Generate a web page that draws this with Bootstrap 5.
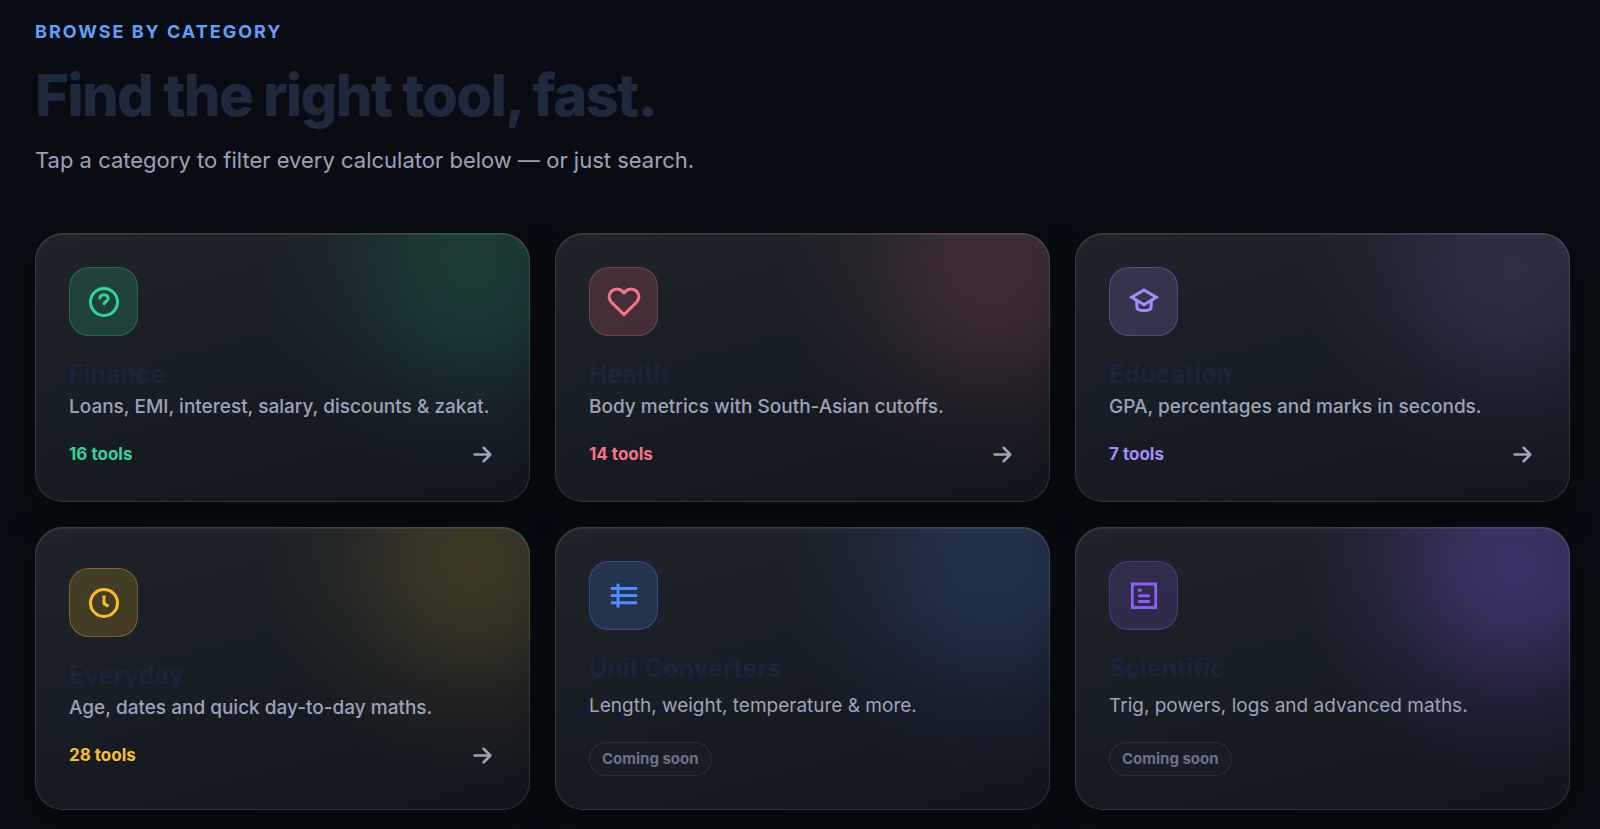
<!DOCTYPE html>
<html lang="en">
<head>
<meta charset="utf-8">
<meta name="viewport" content="width=device-width, initial-scale=1">
<title>Browse by category</title>
<link href="https://cdn.jsdelivr.net/npm/bootstrap@5.3.0/dist/css/bootstrap.min.css" rel="stylesheet">
<style>
  body { background: #090d13; color: #9ca3b8; font-family: Inter, "Liberation Sans", sans-serif; overflow-x: hidden; }
  .browse { padding: 17px 30px 19px 35px; }
  .eyebrow { color: #60a0fc; font-size: 18px; line-height: 30px; font-weight: 700; letter-spacing: 2px; text-transform: uppercase; }
  .headline { color: #1e293b; font-size: 58px; line-height: 64px; font-weight: 800; letter-spacing: -0.03em; margin: 16px 0 15px; }
  .intro { font-size: 22px; line-height: 36px; margin-bottom: 55px; }
  .tiles { display: grid; grid-template-columns: repeat(3, minmax(0, 1fr)); gap: 25px; }
  .tile {
    display: flex; flex-direction: column; justify-content: center; align-items: stretch; text-align: left;
    padding: 33px; border: 1px solid rgba(255,255,255,.12); border-radius: 28px; color: #9ca3b8;
    background: radial-gradient(circle at calc(100% - 55px) 42px, rgba(var(--tone), var(--glow, .17)) 0, rgba(var(--tone), calc(var(--glow, .17) * .8)) 60px, rgba(var(--tone), calc(var(--glow, .17) * .3)) 135px, rgba(var(--tone), 0) 215px),
      linear-gradient(165deg, #20242a 0%, #181e25 45%, #12151d 100%);
    background-origin: border-box;
    box-shadow: 0 12px 36px rgba(0,0,0,.4), inset 0 1px 0 rgba(255,255,255,.08);
  }
  .tile-icon { width: 69px; height: 69px; border-radius: 20px; color: rgb(var(--tone)); background: rgba(var(--tone), .18); border: 1px solid rgba(var(--tone), .3); }
  .tile-icon svg { width: 36px; height: 36px; }
  .tile svg { fill: none; stroke: currentColor; stroke-width: 2; }
  .tile-name { color: #1b2438; font-size: 25px; line-height: 31px; font-weight: 700; margin: 23px 0 2px; }
  .tile-text { font-size: 19px; line-height: 29px; font-weight: 500; margin: 0 0 19px; }
  .tile-count { color: rgb(var(--tone)); font-size: 17px; line-height: 28px; font-weight: 700; }
  .tile .tile-arrow { width: 27px; height: 27px; stroke-width: 2.25; }
  .tile-soon .tile-name { margin-bottom: 7px; }
  .tile-soon .tile-text { font-weight: 400; margin-bottom: 22px; }
  .soon { color: #6b7188; font-size: 15px; line-height: 20px; font-weight: 700; padding: 6px 12px; border: 1px solid rgba(255,255,255,.08); background: rgba(255,255,255,.01); }
  .tone-finance { --tone: 52,211,153; --glow: .16; }
  .tone-health { --tone: 251,113,133; }
  .tone-education { --tone: 167,139,250; --glow: .15; }
  .tone-everyday { --tone: 251,191,36; --glow: .16; }
  .tone-units { --tone: 79,140,255; --glow: .18; }
  .tone-science { --tone: 139,92,246; --glow: .32; }
  @media (max-width: 991px) { .tiles { grid-template-columns: repeat(2, minmax(0, 1fr)); } }
  @media (max-width: 640px) { .tiles { grid-template-columns: minmax(0, 1fr); } .headline { font-size: 40px; line-height: 46px; } }
</style>
</head>
<body>
<main class="container-fluid browse">
  <header>
    <p class="eyebrow mb-0">Browse by category</p>
    <h1 class="headline">Find the right tool, fast.</h1>
    <p class="intro">Tap a category to filter every calculator below — or just search.</p>
  </header>
  <section class="tiles">
    <button type="button" class="tile tone-finance">
      <span class="tile-icon d-flex align-items-center justify-content-center">
        <svg viewBox="0 0 24 24" stroke-linecap="round"><circle cx="12" cy="12" r="9"/><path d="M9.200 9.300a2.800 2.300 0 1 1 4.400 2L12 13.100"/></svg>
      </span>
      <span class="tile-name d-block">Finance</span>
      <span class="tile-text d-block">Loans, EMI, interest, salary, discounts &amp; zakat.</span>
      <span class="d-flex justify-content-between align-items-center"><span class="tile-count">16 tools</span>
        <svg class="tile-arrow" viewBox="0 0 24 24" stroke-linecap="round" stroke-linejoin="round"><path d="M5 12h14M13 6l6 6-6 6"/></svg></span>
    </button>
    <button type="button" class="tile tone-health">
      <span class="tile-icon d-flex align-items-center justify-content-center">
        <svg viewBox="0 0 24 24" stroke-linejoin="round"><path d="M20.4 4.9a5.1 5.1 0 0 0-7.4 0l-1 1-1-1a5.1 5.1 0 0 0-7.4 0 5.2 5.2 0 0 0 0 7.3L12 20.4l8.4-8.2a5.2 5.2 0 0 0 0-7.3z"/></svg>
      </span>
      <span class="tile-name d-block">Health</span>
      <span class="tile-text d-block">Body metrics with South-Asian cutoffs.</span>
      <span class="d-flex justify-content-between align-items-center"><span class="tile-count">14 tools</span>
        <svg class="tile-arrow" viewBox="0 0 24 24" stroke-linecap="round" stroke-linejoin="round"><path d="M5 12h14M13 6l6 6-6 6"/></svg></span>
    </button>
    <button type="button" class="tile tone-education">
      <span class="tile-icon d-flex align-items-center justify-content-center">
        <svg viewBox="0 0 24 24"><path d="M12 4l8.2 4.8L12 13.8 3.8 8.8z"/><path d="M7.2 10.5V15Q7.2 17.7 12 17.7T16.800 15V10.5"/></svg>
      </span>
      <span class="tile-name d-block">Education</span>
      <span class="tile-text d-block">GPA, percentages and marks in seconds.</span>
      <span class="d-flex justify-content-between align-items-center"><span class="tile-count">7 tools</span>
        <svg class="tile-arrow" viewBox="0 0 24 24" stroke-linecap="round" stroke-linejoin="round"><path d="M5 12h14M13 6l6 6-6 6"/></svg></span>
    </button>
    <button type="button" class="tile tone-everyday">
      <span class="tile-icon d-flex align-items-center justify-content-center">
        <svg viewBox="0 0 24 24" stroke-linejoin="round"><circle cx="12" cy="12" r="9"/><path d="M12 7v5.4l3 1.8"/></svg>
      </span>
      <span class="tile-name d-block">Everyday</span>
      <span class="tile-text d-block">Age, dates and quick day-to-day maths.</span>
      <span class="d-flex justify-content-between align-items-center"><span class="tile-count">28 tools</span>
        <svg class="tile-arrow" viewBox="0 0 24 24" stroke-linecap="round" stroke-linejoin="round"><path d="M5 12h14M13 6l6 6-6 6"/></svg></span>
    </button>
    <article class="tile tile-soon tone-units">
      <div class="tile-icon d-flex align-items-center justify-content-center">
        <svg viewBox="0 0 24 24"><path d="M3.3 7h17.4M3.3 11.7h17.4M3.3 16.5h17.4M8 3.9v15.8"/></svg>
      </div>
      <h2 class="tile-name">Unit Converters</h2>
      <p class="tile-text">Length, weight, temperature &amp; more.</p>
      <span class="soon rounded-pill align-self-start">Coming soon</span>
    </article>
    <article class="tile tile-soon tone-science">
      <div class="tile-icon d-flex align-items-center justify-content-center">
        <svg viewBox="0 0 24 24"><path d="M4.2 4h15.6v15.6H4.200zM8 8.200h2.400M8 11.800h8M8 15.600h8"/></svg>
      </div>
      <h2 class="tile-name">Scientific</h2>
      <p class="tile-text">Trig, powers, logs and advanced maths.</p>
      <span class="soon rounded-pill align-self-start">Coming soon</span>
    </article>
  </section>
</main>
<script src="https://cdn.jsdelivr.net/npm/bootstrap@5.3.0/dist/js/bootstrap.bundle.min.js"></script>
</body>
</html>
